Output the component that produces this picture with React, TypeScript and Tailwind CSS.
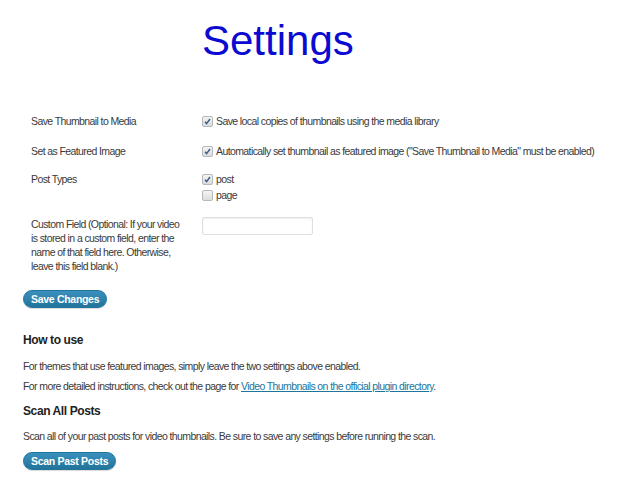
import React from 'react'

const Check = ({ checked }: { checked?: boolean }) => (
  <span className="inline-flex w-[11px] h-[11px] shrink-0 items-center justify-center border border-[#b4b9be] bg-gradient-to-b from-[#f4f4f4] to-[#dcdcdc] rounded-[2px]">
    {checked && (
      <svg width="9" height="9" viewBox="0 0 9 9">
        <path d="M2 4.8 L3.6 6.6 L7 2" fill="none" stroke="#3b5e86" strokeWidth="1.5" />
      </svg>
    )}
  </span>
)

const Btn = ({ children }: { children: React.ReactNode }) => (
  <button className="h-[18px] px-[7px] rounded-full bg-gradient-to-b from-[#3a8fbd] to-[#21759b] border border-[#21759b] text-white text-[10.5px] tracking-[-0.3px] font-bold leading-none shadow-[0_1px_1px_rgba(0,0,0,0.15)]">
    {children}
  </button>
)

export default function App() {
  return (
    <div className="w-[618px] h-[498px] bg-white text-[#3a3a3a] font-['Liberation_Sans',Arial,sans-serif] text-[10.5px] tracking-[-0.6px] leading-[14px] whitespace-nowrap">
      <h1 className="pl-[202px] pt-[17px] text-[42px] leading-[48px] tracking-normal text-[#0a0ad0]">
        Settings
      </h1>

      {/* options */}
      <div className="pl-[31px] pt-[49px] flex flex-col">
        <div className="flex">
          <div className="w-[171px]">Save Thumbnail to Media</div>
          <label className="flex items-center gap-[3px]">
            <Check checked />
            <span>Save local copies of thumbnails using the media library</span>
          </label>
        </div>

        <div className="flex mt-[16px]">
          <div className="w-[171px]">Set as Featured Image</div>
          <label className="flex items-center gap-[3px]">
            <Check checked />
            <span>Automatically set thumbnail as featured image ("Save Thumbnail to Media" must be enabled)</span>
          </label>
        </div>

        <div className="flex mt-[14px]">
          <div className="w-[171px]">Post Types</div>
          <div className="flex flex-col gap-[2px]">
            <label className="flex items-center gap-[3px]">
              <Check checked />
              <span>post</span>
            </label>
            <label className="flex items-center gap-[3px]">
              <Check />
              <span>page</span>
            </label>
          </div>
        </div>

        <div className="flex mt-[15px]">
          <div className="w-[171px]">
            Custom Field (Optional: If your video<br />
            is stored in a custom field, enter the<br />
            name of that field here. Otherwise,<br />
            leave this field blank.)
          </div>
          <input
            type="text"
            className="w-[111px] h-[18px] border border-[#dfdfdf] rounded-[2px] bg-white shadow-[inset_0_1px_2px_rgba(0,0,0,0.07)]"
          />
        </div>
      </div>

      <div className="pl-[23px] pt-[17px]">
        <Btn>Save Changes</Btn>

        <h3 className="mt-[24px] text-[12px] tracking-[-0.4px] leading-[16px] font-bold text-[#222]">How to use</h3>
        <p className="mt-[11px]">For themes that use featured images, simply leave the two settings above enabled.</p>
        <p className="mt-[6px]">
          For more detailed instructions, check out the page for{' '}
          <a className="text-[#21759b] underline">Video Thumbnails on the official plugin directory</a>.
        </p>

        <h3 className="mt-[10px] text-[12px] tracking-[-0.4px] leading-[16px] font-bold text-[#222]">Scan All Posts</h3>
        <p className="mt-[10px]">Scan all of your past posts for video thumbnails. Be sure to save any settings before running the scan.</p>
        <div className="mt-[9px]">
          <Btn>Scan Past Posts</Btn>
        </div>
      </div>
    </div>
  )
}
